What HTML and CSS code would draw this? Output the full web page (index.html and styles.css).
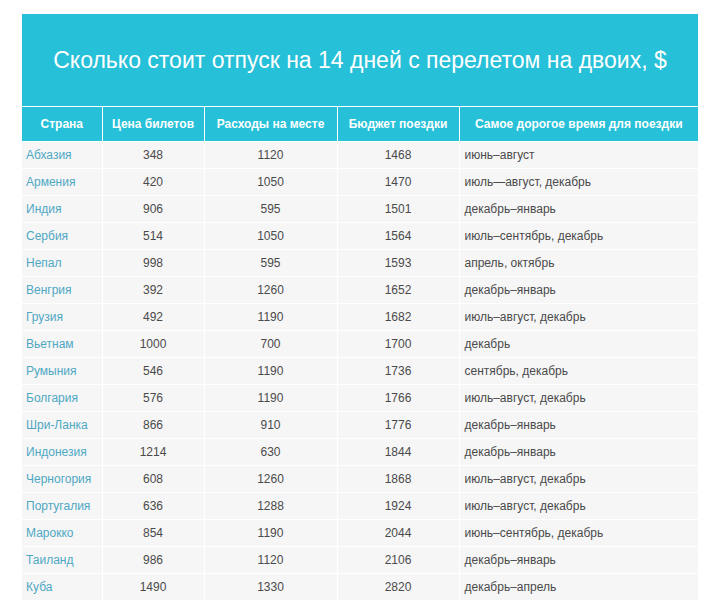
FILE: index.html
```html
<!DOCTYPE html>
<html lang="ru">
<head>
<meta charset="utf-8">
<title>Отпуск</title>
<link rel="stylesheet" href="styles.css">
</head>
<body>
<div class="wrap">
  <div class="title">Сколько стоит отпуск на 14 дней с перелетом на двоих, $</div>
  <table class="tbl">
    <colgroup>
      <col class="c1"><col class="c2"><col class="c3"><col class="c4"><col class="c5">
    </colgroup>
    <thead>
      <tr><th>Страна</th><th>Цена билетов</th><th>Расходы на месте</th><th>Бюджет поездки</th><th>Самое дорогое время для поездки</th></tr>
    </thead>
    <tbody>
      <tr><td class="cn">Абхазия</td><td>348</td><td>1120</td><td>1468</td><td class="tm">июнь–август</td></tr>
      <tr><td class="cn">Армения</td><td>420</td><td>1050</td><td>1470</td><td class="tm">июль—август, декабрь</td></tr>
      <tr><td class="cn">Индия</td><td>906</td><td>595</td><td>1501</td><td class="tm">декабрь–январь</td></tr>
      <tr><td class="cn">Сербия</td><td>514</td><td>1050</td><td>1564</td><td class="tm">июль–сентябрь, декабрь</td></tr>
      <tr><td class="cn">Непал</td><td>998</td><td>595</td><td>1593</td><td class="tm">апрель, октябрь</td></tr>
      <tr><td class="cn">Венгрия</td><td>392</td><td>1260</td><td>1652</td><td class="tm">декабрь–январь</td></tr>
      <tr><td class="cn">Грузия</td><td>492</td><td>1190</td><td>1682</td><td class="tm">июль–август, декабрь</td></tr>
      <tr><td class="cn">Вьетнам</td><td>1000</td><td>700</td><td>1700</td><td class="tm">декабрь</td></tr>
      <tr><td class="cn">Румыния</td><td>546</td><td>1190</td><td>1736</td><td class="tm">сентябрь, декабрь</td></tr>
      <tr><td class="cn">Болгария</td><td>576</td><td>1190</td><td>1766</td><td class="tm">июль–август, декабрь</td></tr>
      <tr><td class="cn">Шри-Ланка</td><td>866</td><td>910</td><td>1776</td><td class="tm">декабрь–январь</td></tr>
      <tr><td class="cn">Индонезия</td><td>1214</td><td>630</td><td>1844</td><td class="tm">декабрь–январь</td></tr>
      <tr><td class="cn">Черногория</td><td>608</td><td>1260</td><td>1868</td><td class="tm">июль–август, декабрь</td></tr>
      <tr><td class="cn">Португалия</td><td>636</td><td>1288</td><td>1924</td><td class="tm">июль–август, декабрь</td></tr>
      <tr><td class="cn">Марокко</td><td>854</td><td>1190</td><td>2044</td><td class="tm">июнь–сентябрь, декабрь</td></tr>
      <tr><td class="cn">Таиланд</td><td>986</td><td>1120</td><td>2106</td><td class="tm">декабрь–январь</td></tr>
      <tr><td class="cn">Куба</td><td>1490</td><td>1330</td><td>2820</td><td class="tm">декабрь–апрель</td></tr>
    </tbody>
  </table>
</div>
</body>
</html>
```
FILE: styles.css
```css
html, body {
  margin: 0;
  padding: 0;
  background: #ffffff;
}
body {
  font-family: "Liberation Sans", Arial, sans-serif;
}
.wrap {
  width: 676px;
  margin: 14px 0 0 22px;
}
.title {
  background: #26c0d8;
  color: #ffffff;
  height: 92px;
  display: flex;
  align-items: center;
  justify-content: center;
  font-size: 23px;
}
.tbl {
  width: 676px;
  border-collapse: collapse;
  table-layout: fixed;
}
.c1 { width: 80px; }
.c2 { width: 102px; }
.c3 { width: 133px; }
.c4 { width: 122px; }
.c5 { width: 239px; }
.tbl th {
  background: #26c0d8;
  color: #ffffff;
  font-weight: bold;
  font-size: 12px;
  height: 34px;
  padding: 0;
  border-top: 1px solid #ffffff;
  border-left: 1px solid #ffffff;
  text-align: center;
}
.tbl th:first-child { border-left: none; }
.tbl td {
  background: #f6f6f7;
  color: #4a4a4a;
  font-size: 12px;
  height: 26px;
  padding: 0;
  border-top: 1px solid #ffffff;
  border-left: 1px solid #ffffff;
  text-align: center;
}
.tbl td:first-child { border-left: none; }
.tbl td.cn {
  text-align: left;
  padding-left: 4px;
  color: #4fa8c2;
}
.tbl td.tm {
  text-align: left;
  padding-left: 5px;
}
```
